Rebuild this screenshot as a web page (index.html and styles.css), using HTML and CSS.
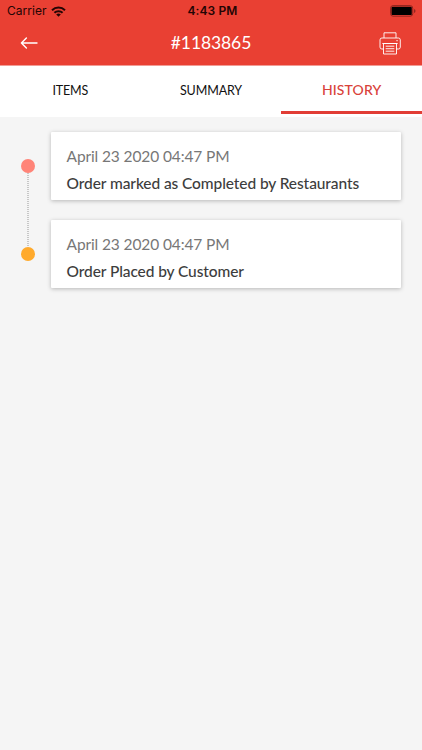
FILE: index.html
```html
<!DOCTYPE html>
<html lang="en">
<head>
<meta charset="utf-8">
<title>Order #1183865</title>
<link rel="stylesheet" href="styles.css">
</head>
<body>
<header class="header">
  <div class="status">
    <div class="carrier"><span>Carrier</span>
      <svg class="wifi" width="15" height="11" viewBox="0 0 15 11"><g fill="none" stroke="#240504" stroke-width="2"><path d="M1 4.200a9.400 9.400 0 0 1 13 0"/><path d="M3.400 6.800a5.900 5.900 0 0 1 8.200 0"/></g><path d="M5.200 8.500a3.400 3.400 0 0 1 4.600 0L7.500 10.800z" fill="#240504"/></svg>
    </div>
    <div class="time">4:43 PM</div>
    <svg class="battery" width="26" height="12" viewBox="0 0 27 12" preserveAspectRatio="none"><rect x=".6" y=".6" width="23" height="10.600" rx="2.600" fill="none" stroke="#8f241e" stroke-width="1"/><rect x="1.600" y="1.700" width="21" height="8.400" rx="1.200" fill="#000"/><path d="M25 4v4q1.500-.7 1.500-2T25 4z" fill="#8f241e"/></svg>
  </div>
  <div class="nav">
    <svg class="back" width="18" height="13" viewBox="0 0 18 13"><path d="M17 6H1.400M6.400 1L1.400 6l5 5" fill="none" stroke="#fff" stroke-width="1.400" stroke-linecap="round" stroke-linejoin="round"/></svg>
    <h1 class="title">#1183865</h1>
    <svg class="print" width="22" height="23" viewBox="0 0 22 23"><g fill="none" stroke="#fff" stroke-opacity=".9" stroke-width="1"><path d="M5 6V.8h12V6M4.500 17H2.900A1.900 1.900 0 0 1 1 15.100V7.900A1.900 1.900 0 0 1 2.900 6h16.500A1.900 1.900 0 0 1 21.300 7.900v7.200a1.900 1.900 0 0 1-1.900 1.900H17.500"/><path d="M4.500 11.500h13v10.500h-13zM3.300 11.500h15.400M6.700 14.200h8.600M6.700 16.700h8.600M6.700 19.200h8.600M17.300 8.700h1.500"/></g></svg>
  </div>
</header>
<nav class="tabs">
  <a class="tab">ITEMS</a>
  <a class="tab summary">SUMMARY</a>
  <a class="tab active">HISTORY</a>
</nav>
<main class="timeline">
  <div class="rail">
    <span class="dot completed"></span>
    <svg class="line" width="2" height="74" viewBox="0 0 2 74"><path d="M1 0V74" stroke="#999" stroke-width="1" stroke-dasharray="1 1"/></svg>
    <span class="dot placed"></span>
  </div>
  <div class="cards">
    <article class="card">
      <div class="date">April 23 2020 04:47 PM</div>
      <div class="event">Order marked as Completed by Restaurants</div>
    </article>
    <article class="card">
      <div class="date">April 23 2020 04:47 PM</div>
      <div class="event">Order Placed by Customer</div>
    </article>
  </div>
</main>
</body>
</html>
```
FILE: styles.css
```css
* { box-sizing: border-box; }
body {
  margin: 0;
  min-height: 750px;
  background: #f5f5f5;
  font-family: Lato, sans-serif;
}
svg { display: block; }
.header {
  height: 66px;
  background: #e94033;
  border-bottom: 1px solid #f19c95;
}
.status {
  height: 22px;
  padding: 0 6px 0 7px;
  display: grid;
  grid-template-columns: 1fr auto 1fr;
  align-items: center;
  font: 12px/22px Inter, sans-serif;
  color: #240504;
}
.carrier { display: flex; align-items: center; gap: 4px; letter-spacing: .05px; }
.time { font-weight: 600; letter-spacing: .1px; padding-left: 2px; }
.battery { justify-self: end; }
.nav {
  height: 43px;
  padding: 0 21px 0 20px;
  display: grid;
  grid-template-columns: 1fr auto 1fr;
  align-items: center;
}
.title {
  margin: 0;
  color: #fff;
  font-size: 17.500px;
  line-height: 20px;
  font-weight: 400;
  letter-spacing: -.1px;
  padding: 0 0 1px 1px;
}
.print { justify-self: end; }
.tabs {
  height: 51px;
  display: grid;
  grid-template-columns: repeat(3, 1fr);
  background: #fff;
}
.tab {
  height: 48px;
  text-align: center;
  font-size: 12.500px;
  line-height: 49px;
  letter-spacing: -.12px;
  color: #111;
}
.tab.active {
  font-size: 14px;
  line-height: 48px;
  letter-spacing: .1px;
  color: #d9423a;
  border-bottom: 3px solid #e13d35;
  font-weight: 500;
}
.timeline {
  padding: 15px 21px 0 21.300px;
  display: flex;
  gap: 15.700px;
}
.rail {
  width: 14px;
  padding-top: 27px;
  display: flex;
  flex-direction: column;
  align-items: center;
}
.dot { width: 14px; height: 14px; border-radius: 50%; }
.completed { background: #ff8478; }
.placed { background: #ffaa2c; }
.cards {
  flex: 1;
  display: flex;
  flex-direction: column;
  gap: 20.300px;
}
.card {
  height: 68px;
  padding: 13px 15.600px;
  background: #fff;
  border-radius: 1px;
  box-shadow: 0 1px 4px rgba(0, 0, 0, .26);
  line-height: 22px;
  white-space: nowrap;
}
.date { color: #777; font-size: 15.500px; letter-spacing: -.12px; }
.event {
  margin-top: 5px;
  color: #3d3d3d;
  font-size: 15.500px;
  font-weight: 500;
  letter-spacing: -.09px;
}
```
